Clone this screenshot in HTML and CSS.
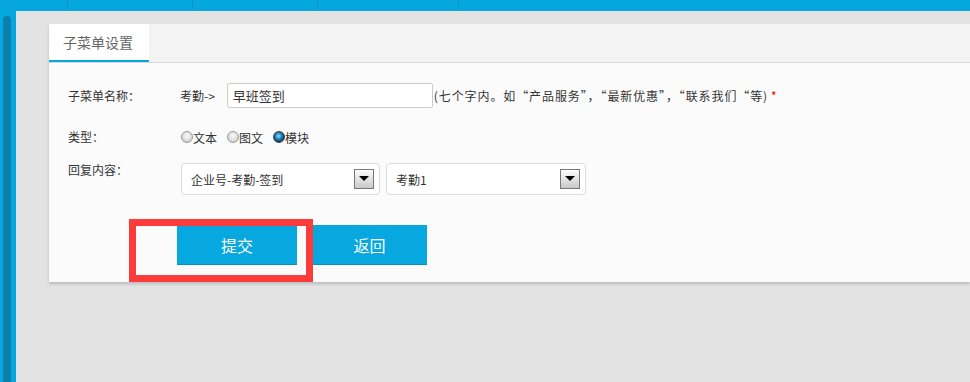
FILE: index.html
```html
<!DOCTYPE html>
<html lang="zh-CN">
<head>
    <meta charset="UTF-8">
    <title>子菜单设置</title>
    <link rel="stylesheet" href="styles.css">
</head>
<body>

    <div class="topbar">
        <span class="top-item first"></span>
        <span class="top-item"></span>
        <span class="top-item"></span>
        <span class="top-item wide"></span>
    </div>

    <div class="page">
        <div class="sidebar">
            <div class="sidebar-track"></div>
        </div>

        <div class="main">
            <div class="panel">
                <div class="tabs">
                    <a class="tab active" href="#">子菜单设置</a>
                </div>

                <div class="panel-body">
                    <div class="form-row row-name">
                        <label class="form-label">子菜单名称：</label>
                        <div class="form-value">
                            <span class="prefix">考勤-&gt;</span>
                            <input class="text-input" type="text" value="早班签到">
                            <span class="hint">(七个字内。如“产品服务”，“最新优惠”，“联系我们“等)</span>
                            <span class="required">*</span>
                        </div>
                    </div>

                    <div class="form-row row-type">
                        <label class="form-label">类型：</label>
                        <div class="form-value">
                            <label class="radio"><input type="radio" name="type">文本</label>
                            <label class="radio"><input type="radio" name="type">图文</label>
                            <label class="radio"><input type="radio" name="type" checked>模块</label>
                        </div>
                    </div>

                    <div class="form-row row-reply">
                        <label class="form-label">回复内容：</label>
                        <div class="form-value">
                            <div class="select">
                                <span class="select-text">企业号-考勤-签到</span>
                                <span class="select-arrow"></span>
                            </div>
                            <div class="select">
                                <span class="select-text">考勤1</span>
                                <span class="select-arrow"></span>
                            </div>
                        </div>
                    </div>

                    <div class="actions">
                        <button class="btn">提交</button>
                        <button class="btn">返回</button>
                    </div>
                </div>

                <div class="highlight"></div>
            </div>
        </div>
    </div>

</body>
</html>
```

FILE: styles.css
```css
body {
    margin: 0;
    padding: 0;
    font-family: "Noto Sans CJK SC", "Liberation Sans", sans-serif;
    font-size: 12px;
    color: #333;
    background-color: #e3e3e3;
    height: 382px;
    overflow: hidden;
}

/* top blue bar */
.topbar {
    display: flex;
    height: 11px;
    background-color: #06a6df;
}
.top-item {
    width: 124px;
    height: 9px;
    border-right: 1px solid #0590c6;
}
.top-item.first {
    width: 67px;
}
.top-item.wide {
    width: 140px;
}

.page {
    display: flex;
    height: 371px;
}

/* left blue strip */
.sidebar {
    width: 16px;
    background-color: #06a6df;
    padding-top: 5px;
    box-sizing: border-box;
    display: flex;
    justify-content: flex-start;
}
.sidebar-track {
    width: 8px;
    margin-left: 3px;
    background-color: #0a80ae;
    border-radius: 4px 4px 0 0;
}

.main {
    flex: 1;
    padding: 13px 0 0 33px;
}

.panel {
    position: relative;
    background-color: #fbfbfb;
    box-shadow: 0 2px 3px rgba(0, 0, 0, 0.18);
}

.tabs {
    display: flex;
    height: 38px;
    background-color: #f3f3f3;
    border-bottom: 1px solid #d9d9d9;
}
.tab {
    display: block;
    width: 100px;
    box-sizing: border-box;
    padding-left: 14px;
    line-height: 36px;
    font-size: 14px;
    color: #666;
    text-decoration: none;
}
.tab.active {
    background-color: #fff;
    border-bottom: 2px solid #06a6df;
}

.panel-body {
    padding: 20px 0 17px 19px;
}

.form-row {
    display: flex;
    align-items: center;
}
.form-label {
    width: 112px;
    flex-shrink: 0;
    line-height: 14px;
}
.form-value {
    display: flex;
    align-items: center;
}

.row-name {
    height: 25px;
}
.prefix {
    margin-right: 12px;
}
.text-input {
    width: 206px;
    height: 25px;
    box-sizing: border-box;
    border: 1px solid #ccc;
    border-radius: 2px;
    padding: 0 5px;
    font-family: inherit;
    font-size: 13px;
    color: #333;
    outline: none;
}
.hint {
    margin-left: 1px;
    letter-spacing: 0.9px;
}
.required {
    color: #f00;
    margin-left: 3px;
}

.row-type {
    height: 24px;
    margin-top: 17px;
}
.radio {
    display: flex;
    align-items: center;
    margin-right: 9px;
}
.radio input {
    appearance: none;
    width: 12px;
    height: 12px;
    margin: 0 0 0 1px;
    border: 1px solid #9a9a9a;
    border-radius: 50%;
    background: radial-gradient(circle at 50% 40%, #fafafa 0%, #dedede 55%, #b8b8b8 100%);
}
.radio input:checked {
    border-color: #3c3c3c;
    background: radial-gradient(circle at 45% 40%, #9adcf8 0%, #1a80c2 40%, #0b3d66 70%, #d0d0d0 82%);
}

.row-reply {
    align-items: flex-start;
    margin-top: 14px;
}
.row-reply .form-value {
    margin-left: 1px;
}

.select {
    display: flex;
    align-items: center;
    justify-content: space-between;
    width: 199px;
    height: 32px;
    box-sizing: border-box;
    margin-right: 6px;
    padding: 0 5px 0 9px;
    background-color: #fff;
    border: 1px solid #dcdcdc;
    border-radius: 4px;
    font-size: 12px;
}
.select + .select {
    width: 200px;
}
.select-arrow {
    position: relative;
    width: 20px;
    height: 20px;
    box-sizing: border-box;
    border: 1px solid #777;
    background: linear-gradient(#fdfdfd, #c9c9c9);
}
.select-arrow::after {
    content: "";
    position: absolute;
    left: 4px;
    top: 6px;
    border-left: 5px solid transparent;
    border-right: 5px solid transparent;
    border-top: 5px solid #000;
}

.actions {
    display: flex;
    gap: 15px;
    margin: 30px 0 0 109px;
}
.btn {
    width: 120px;
    height: 40px;
    border: none;
    border-bottom: 1px solid #0591c4;
    background-color: #07a7df;
    color: #fff;
    font-family: inherit;
    font-size: 16px;
    cursor: pointer;
}
.btn + .btn {
    width: 115px;
}

/* red annotation box drawn over the submit button */
.highlight {
    position: absolute;
    left: 80px;
    top: 195px;
    width: 184px;
    height: 63px;
    box-sizing: border-box;
    border: 7px solid #fc3b3b;
}
```
